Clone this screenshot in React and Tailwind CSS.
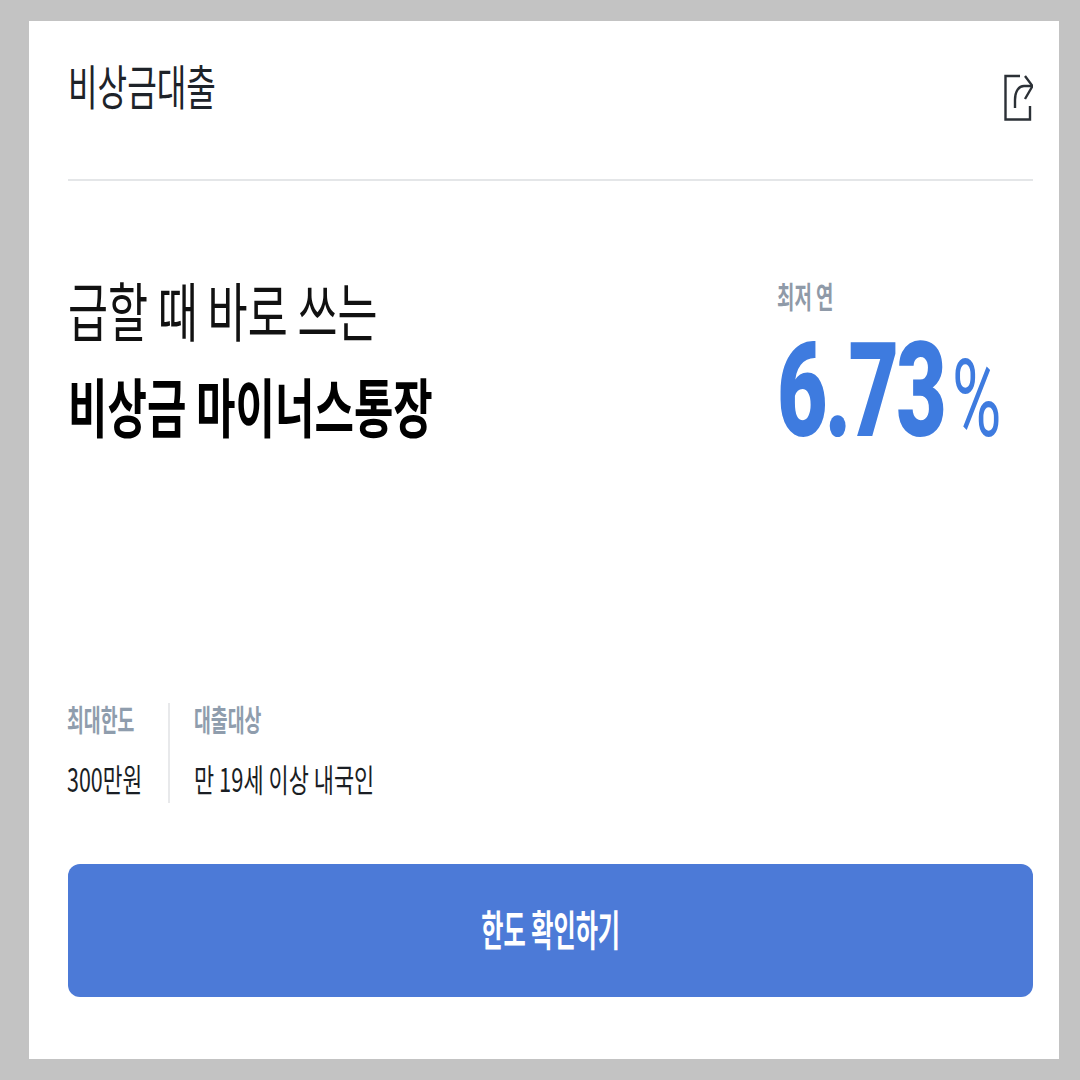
import React from "react";

const FONT = '"Noto Sans CJK KR", "Noto Sans", sans-serif';

function ShareIcon() {
  return (
    <svg width="30" height="48" viewBox="0 0 30 48" fill="none" stroke="#2b3036" strokeWidth="2.400">
      <path d="M17 2H2.500V45.500H27V32" />
      <path d="M12 34V26C12 17 16 12 21 12H29" />
      <path d="M22 2L29.500 12L22 25" />
    </svg>
  );
}

export default function App() {
  return (
    <div className="w-[1080px] h-[1080px] bg-[#c3c3c3] pt-[21px] pb-[21px] pl-[29px] pr-[21px] overflow-hidden" style={{ fontFamily: FONT }}>
      <div className="h-full bg-white pl-[39px] pr-[26px] flex flex-col">
        {/* header */}
        <div className="h-[160px] shrink-0 flex justify-between border-b-2 border-[#e4e6e8]">
          <h1 className="mt-[34px] h-[58px] whitespace-nowrap origin-left scale-x-[0.67] text-[48px] leading-[58px] font-normal text-[#1e2329]">비상금대출</h1>
          <div className="mt-[53px]">
            <ShareIcon />
          </div>
        </div>

        {/* main copy + rate */}
        <div className="h-[522px] shrink-0 flex justify-between">
          <div className="pt-[93px]">
            <p className="whitespace-nowrap origin-left scale-x-[0.68] text-[64px] leading-[68px] font-normal text-[#111]">급할 때 바로 쓰는</p>
            <p className="mt-[28px] whitespace-nowrap origin-left scale-x-[0.67] text-[64px] leading-[68px] font-bold text-black">비상금 마이너스통장</p>
          </div>
          <div className="w-[256px] pt-[94px]">
            <p className="whitespace-nowrap origin-left scale-x-[0.63] text-[30px] leading-[40px] font-bold text-[#8f9aa8]">최저 연</p>
            <div className="mt-[28px] flex items-baseline text-[#3e7bdf]" style={{ fontFamily: '"Roboto", sans-serif' }}>
              <span className="w-[167px] shrink-0 whitespace-nowrap origin-left scale-x-[0.665] text-[131px] leading-[96px] font-black tracking-[-4px]">6.73</span>
              <span className="ml-[8px] whitespace-nowrap origin-left scale-x-[0.63] text-[107px] leading-[70px] font-normal">%</span>
            </div>
          </div>
        </div>

        {/* limit + target */}
        <div className="flex h-[100px] shrink-0">
          <div className="w-[102px] shrink-0 border-r-2 border-[#e8e9eb] flex flex-col gap-[21px]">
            <p className="mt-[-3px] ml-[-1px] whitespace-nowrap origin-left scale-x-[0.61] text-[30px] leading-[36px] font-bold text-[#8f9dad]">최대한도</p>
            <p className="ml-[-1px] whitespace-nowrap origin-left scale-x-[0.67] text-[32px] leading-[42px] text-[#1a1e24]">300만원</p>
          </div>
          <div className="pl-[24px] flex flex-col gap-[21px]">
            <p className="mt-[-3px] whitespace-nowrap origin-left scale-x-[0.61] text-[30px] leading-[36px] font-bold text-[#8f9dad]">대출대상</p>
            <p className="whitespace-nowrap origin-left scale-x-[0.685] text-[32px] leading-[42px] text-[#1a1e24]">만 19세 이상 내국인</p>
          </div>
        </div>

        {/* cta */}
        <button className="mt-[61px] h-[133px] w-full shrink-0 rounded-[12px] bg-[#4c7ad7] pb-[6px] text-white">
          <span className="inline-block whitespace-nowrap scale-x-[0.575] text-[42px] font-bold">한도 확인하기</span>
        </button>
      </div>
    </div>
  );
}
